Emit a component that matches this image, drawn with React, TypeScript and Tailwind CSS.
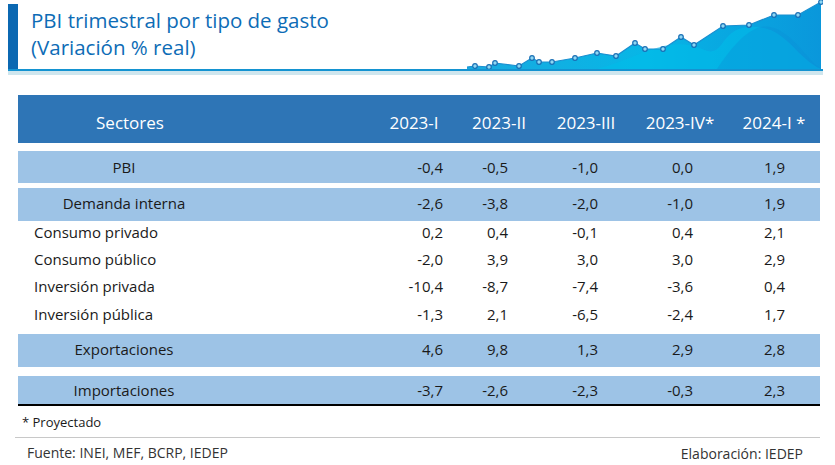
import React from 'react';

const font = { fontFamily: '"Open Sans", "Liberation Sans", sans-serif' };

type Row = {
  label: string;
  values: string[];
  highlight?: boolean;
  rowClass: string;
};

const rows: Row[] = [
  { label: 'PBI', values: ['-0,4', '-0,5', '-1,0', '0,0', '1,9'], highlight: true, rowClass: 'h-[32px] mb-[5px]' },
  { label: 'Demanda interna', values: ['-2,6', '-3,8', '-2,0', '-1,0', '1,9'], highlight: true, rowClass: 'h-[33px] pb-[3px]' },
  { label: 'Consumo privado', values: ['0,2', '0,4', '-0,1', '0,4', '2,1'], rowClass: 'h-[27px] pb-[5px]' },
  { label: 'Consumo público', values: ['-2,0', '3,9', '3,0', '3,0', '2,9'], rowClass: 'h-[27px] pb-[5px]' },
  { label: 'Inversión privada', values: ['-10,4', '-8,7', '-7,4', '-3,6', '0,4'], rowClass: 'h-[28px] pb-[5px]' },
  { label: 'Inversión pública', values: ['-1,3', '2,1', '-6,5', '-2,4', '1,7'], rowClass: 'h-[28px] pb-[5px] mb-[3px]' },
  { label: 'Exportaciones', values: ['4,6', '9,8', '1,3', '2,9', '2,8'], highlight: true, rowClass: 'h-[33px] pb-[2px] mb-[9px]' },
  { label: 'Importaciones', values: ['-3,7', '-2,6', '-2,3', '-0,3', '2,3'], highlight: true, rowClass: 'h-[30px] border-b-2 border-black' },
];

const headers = ['2023-I', '2023-II', '2023-III', '2023-IV*', '2024-I *'];
const valuePad = ['pr-[15px]', 'pr-[32px]', 'pr-[34px]', 'pr-[35px]', 'pr-[35px]'];
const grid = 'grid grid-cols-[352px_88px_82px_92px_96px_92px]';

const pts: [number, number][] = [
  [0, 68], [8, 67], [22, 68], [28, 64], [52, 67], [65, 59], [72, 63], [85, 63],
  [108, 59], [130, 54], [149, 57], [168, 44], [178, 50], [196, 50], [214, 38],
  [227, 46], [256, 27], [282, 26], [307, 16], [331, 16], [354, 3],
];

function Wave() {
  const line = pts.map(([x, y], i) => `${i === 0 ? 'M' : 'L'}${x},${y}`).join(' ');
  const area = `${line} L354,70 L0,70 Z`;
  return (
    <svg width="356" height="70" viewBox="0 0 356 70" className="block">
      <defs>
        <linearGradient id="wg" x1="0" y1="0" x2="1" y2="0">
          <stop offset="0" stopColor="#19a9df" />
          <stop offset="0.5" stopColor="#07b6e6" />
          <stop offset="1" stopColor="#0a97db" />
        </linearGradient>
      </defs>
      <path d={area} fill="url(#wg)" />
      <path d="M130,70 C170,60 200,35 235,50 C260,62 250,25 290,28 C320,30 330,60 354,70 Z" fill="#00bde9" opacity="0.55" />
      <path d="M250,70 C270,40 290,20 310,30 C330,40 340,60 354,70 Z" fill="#0b8fd6" opacity="0.35" />
      <path d={line} fill="none" stroke="#1a8fd0" strokeWidth="1.2" />
      {pts.slice(1).map(([x, y], i) => (
        <circle key={i} cx={x} cy={y} r="2.3" fill="#8fd8f3" stroke="#1a6fb5" strokeWidth="1.2" />
      ))}
    </svg>
  );
}

export default function App() {
  return (
    <div className="w-[835px] h-[465px] bg-white overflow-hidden text-[#1a1a1a]" style={font}>
      {/* Title band */}
      <div className="ml-[8px] mr-[12px] mt-[4px] h-[67px] flex justify-between border-b-2 border-[#1493d1]">
        <div className="flex">
          <div className="w-[10px] bg-[#0b68b2]" />
          <div className="pl-[13px] pt-[3px] text-[#0d6cb6] text-[20.5px] leading-[27px]">
            <div>PBI trimestral por tipo de gasto</div>
            <div>(Variación % real)</div>
          </div>
        </div>
        <div className="self-end">
          <Wave />
        </div>
      </div>
      <div className="ml-[8px] mr-[12px] h-[4px] bg-[#cfe6ee]" />

      {/* Table */}
      <div className="ml-[18px] w-[802px] mt-[20px]">
        <div className={`${grid} h-[48px] pt-[8px] bg-[#2e75b6] text-white text-[17px] items-center mb-[8px]`}>
          <div className="w-[224px] text-center">Sectores</div>
          {headers.map((h) => (
            <div key={h} className="text-center">{h}</div>
          ))}
        </div>
        {rows.map((r) => (
          <div
            key={r.label}
            className={`${grid} ${r.rowClass} ${r.highlight ? 'bg-[#9dc3e6]' : ''} items-center text-[15px]`}
          >
            {r.highlight ? (
              <div className="w-[212px] text-center">{r.label}</div>
            ) : (
              <div className="pl-[16px]">{r.label}</div>
            )}
            {r.values.map((v, i) => (
              <div key={i} className={`text-right ${valuePad[i]}`}>{v}</div>
            ))}
          </div>
        ))}
      </div>

      <div className="h-[31px] pl-[22px] pt-[7px] text-[13px] leading-[18px]">* Proyectado</div>
      <div className="ml-[15px] mr-[15px] border-t border-[#c8c8c8]" />
      <div className="flex justify-between pl-[27px] pr-[32px] pt-[4px] text-[14px] text-[#333]">
        <span>Fuente: INEI, MEF, BCRP, IEDEP</span>
        <span className="pt-[1px]">Elaboración: IEDEP</span>
      </div>
    </div>
  );
}
